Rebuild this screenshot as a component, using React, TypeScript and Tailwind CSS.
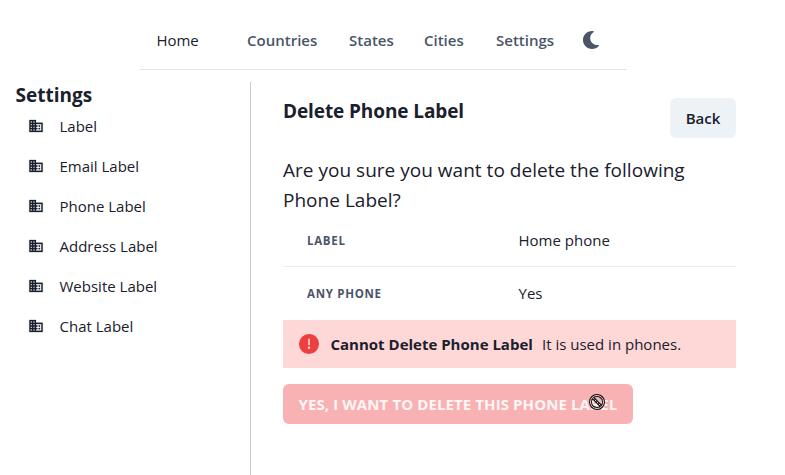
import React from "react";
import { FaMoon } from "react-icons/fa";

const sidebarItems = ["Label", "Email Label", "Phone Label", "Address Label", "Website Label", "Chat Label"];

function BuildingIcon() {
  return (
    <svg viewBox="0 0 24 24" className="mt-[11px] h-4 w-4 shrink-0" fill="currentColor" stroke="currentColor" strokeWidth="0.4" aria-hidden="true">
      <path d="M12 7V3H2v18h20V7H12zM6 19H4v-2h2v2zm0-4H4v-2h2v2zm0-4H4V9h2v2zm0-4H4V5h2v2zm4 12H8v-2h2v2zm0-4H8v-2h2v2zm0-4H8V9h2v2zm0-4H8V5h2v2zm10 12h-8v-2h2v-2h-2v-2h2v-2h-2V9h8v10zm-2-8h-2v2h2v-2zm0 4h-2v2h2v-2z" />
    </svg>
  );
}

function WarningIcon() {
  return (
    <svg viewBox="0 0 24 24" className="h-5 w-5 shrink-0 text-[#ed3e40]" fill="currentColor" aria-hidden="true">
      <path d="M11.983,0a12.206,12.206,0,0,0-8.51,3.653A11.8,11.8,0,0,0,0,12.207,11.779,11.779,0,0,0,11.8,24h.214A12.111,12.111,0,0,0,24,11.791h0A11.766,11.766,0,0,0,11.983,0ZM10.5,16.542a1.476,1.476,0,0,1,1.449-1.53h.027a1.527,1.527,0,0,1,1.523,1.47,1.475,1.475,0,0,1-1.449,1.53h-.027A1.529,1.529,0,0,1,10.5,16.542ZM11,12.5v-6a1,1,0,0,1,2,0v6a1,1,0,1,1-2,0Z" />
    </svg>
  );
}

function BlockedCursor() {
  return (
    <svg viewBox="0 0 18 18" className="absolute left-[305px] top-[9px] h-[18px] w-[18px]" fill="none" aria-hidden="true">
      <circle cx="9" cy="9" r="6.5" stroke="#111" strokeWidth="3" />
      <path d="M4.5 4.5 13.5 13.5" stroke="#111" strokeWidth="3" />
      <circle cx="9" cy="9" r="6.5" stroke="#e6d5d7" strokeWidth="1" />
      <path d="M4.5 4.5 13.5 13.5" stroke="#e6d5d7" strokeWidth="1" strokeDasharray="2 1" />
    </svg>
  );
}

function Nav() {
  return (
    <nav className="ml-[140px] flex h-[70px] w-[487px] items-center border-b border-[#e2e4e8] pb-[1px] pt-[12px] font-semibold text-[#4a5568]">
      <a className="ml-[16.5px] w-[90.5px] font-normal tracking-[-0.1px] text-[#1a202c]">Home</a>
      <a className="w-[102px]">Countries</a>
      <a className="w-[75px]">States</a>
      <a className="w-[72px]">Cities</a>
      <a className="w-[86px]">Settings</a>
      <FaMoon className="h-[18px] w-[18px]" />
    </nav>
  );
}

function Sidebar() {
  return (
    <aside className="w-[251px] shrink-0 border-r border-[#cbcbcb] pl-[15.5px]">
      <h2 className="h-[25px] text-[19px] font-bold leading-[26px]">Settings</h2>
      <ul>
        {sidebarItems.map((item) => (
          <li key={item} className="flex h-10 items-start gap-4 pl-3 leading-10">
            <BuildingIcon />
            <span className="-mt-px">{item}</span>
          </li>
        ))}
      </ul>
    </aside>
  );
}

export default function App() {
  return (
    <div className="h-[475px] w-[785px] overflow-hidden whitespace-nowrap bg-white font-['Open_Sans','Noto_Sans',sans-serif] text-[15px] leading-6 text-[#1a202c]">
      <Nav />
      <div className="mt-3 flex h-[393px]">
        <Sidebar />
        <main className="ml-8 w-[453px] pt-4">
          <div className="flex h-10 justify-between">
            <h1 className="text-[19px] font-bold leading-[26px] tracking-[-0.1px]">Delete Phone Label</h1>
            <button className="h-10 w-[66px] rounded-md bg-[#edf2f7] font-semibold">Back</button>
          </div>
          <p className="mt-[17px] text-[19px] leading-[30px] tracking-[0.02px]">
            Are you sure you want to delete the following
            <br />
            Phone Label?
          </p>
          <dl className="h-[105px]">
            <div className="flex h-[52px] items-center border-b border-[#e8ebef]">
              <dt className="w-[235.5px] pl-6 text-[11.5px] font-bold tracking-[0.7px] text-[#4a5568]">LABEL</dt>
              <dd className="-mt-0.5">Home phone</dd>
            </div>
            <div className="flex h-[53px] items-center">
              <dt className="w-[235.5px] pl-6 text-[11.5px] font-bold tracking-[0.7px] text-[#4a5568]">ANY PHONE</dt>
              <dd className="-mt-0.5">Yes</dd>
            </div>
          </dl>
          <div className="flex h-12 items-center bg-[#fed7d7] px-4">
            <WarningIcon />
            <span className="ml-[11.5px] w-[211.5px] font-bold">Cannot Delete Phone Label</span>
            <span>It is used in phones.</span>
          </div>
          <button className="relative mt-4 block h-10 w-[350px] rounded-md bg-[#f8b2b4] pl-[15.5px] text-left font-bold tracking-[0.1px] text-[#fff5f5]">
            YES, I WANT TO DELETE THIS PHONE LABEL
            <BlockedCursor />
          </button>
        </main>
      </div>
    </div>
  );
}
